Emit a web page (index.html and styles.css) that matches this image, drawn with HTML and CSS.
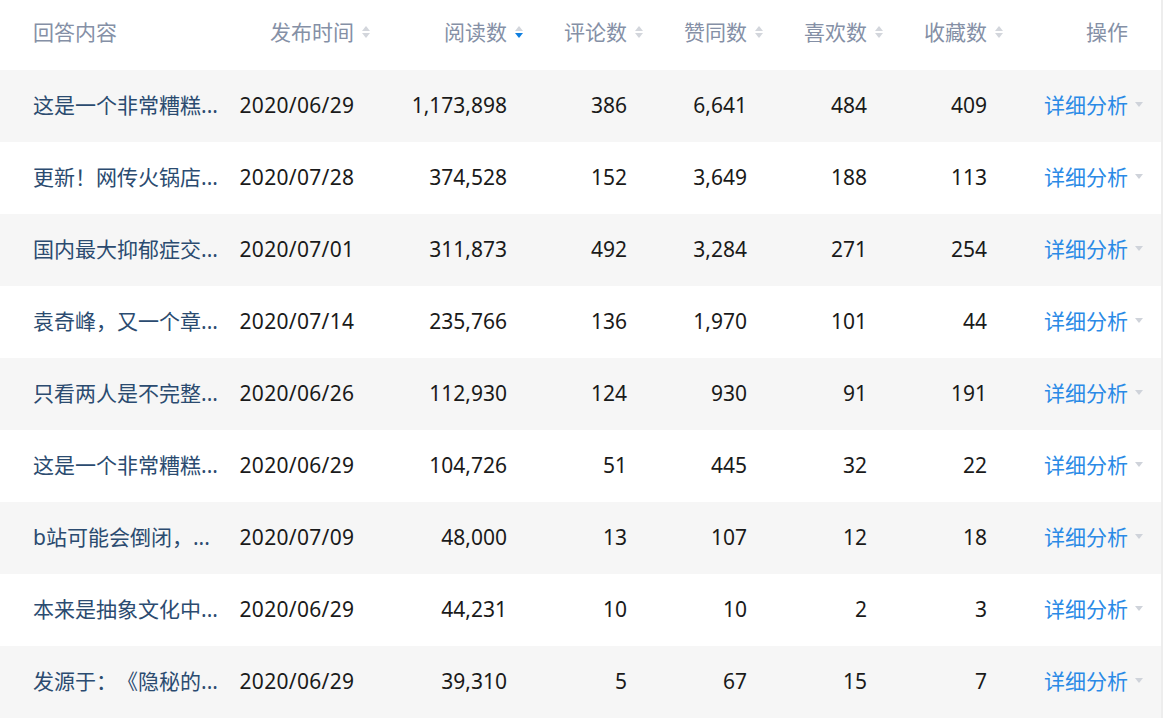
FILE: index.html
```html
<!DOCTYPE html>
<html lang="zh-CN">
<head>
<meta charset="utf-8">
<title>回答数据</title>
<link rel="stylesheet" href="styles.css">
</head>
<body>
<div class="table">
  <div class="row head">
    <div class="cell title">回答内容</div>
    <div class="cell num"><span class="sortable">发布时间<span class="sort"><i class="up"></i><i class="down"></i></span></span></div>
    <div class="cell num"><span class="sortable">阅读数<span class="sort"><i class="up"></i><i class="down active"></i></span></span></div>
    <div class="cell num"><span class="sortable">评论数<span class="sort"><i class="up"></i><i class="down"></i></span></span></div>
    <div class="cell num"><span class="sortable">赞同数<span class="sort"><i class="up"></i><i class="down"></i></span></span></div>
    <div class="cell num"><span class="sortable">喜欢数<span class="sort"><i class="up"></i><i class="down"></i></span></span></div>
    <div class="cell num"><span class="sortable">收藏数<span class="sort"><i class="up"></i><i class="down"></i></span></span></div>
    <div class="cell op">操作</div>
  </div>

  <div class="row odd">
    <div class="cell title"><a class="link">这是一个非常糟糕...</a></div>
    <div class="cell num date">2020/06/29</div>
    <div class="cell num">1,173,898</div>
    <div class="cell num">386</div>
    <div class="cell num">6,641</div>
    <div class="cell num">484</div>
    <div class="cell num">409</div>
    <div class="cell op"><span class="action">详细分析<i class="caret"></i></span></div>
  </div>
  <div class="row">
    <div class="cell title"><a class="link">更新！网传火锅店...</a></div>
    <div class="cell num date">2020/07/28</div>
    <div class="cell num">374,528</div>
    <div class="cell num">152</div>
    <div class="cell num">3,649</div>
    <div class="cell num">188</div>
    <div class="cell num">113</div>
    <div class="cell op"><span class="action">详细分析<i class="caret"></i></span></div>
  </div>
  <div class="row odd">
    <div class="cell title"><a class="link">国内最大抑郁症交...</a></div>
    <div class="cell num date">2020/07/01</div>
    <div class="cell num">311,873</div>
    <div class="cell num">492</div>
    <div class="cell num">3,284</div>
    <div class="cell num">271</div>
    <div class="cell num">254</div>
    <div class="cell op"><span class="action">详细分析<i class="caret"></i></span></div>
  </div>
  <div class="row">
    <div class="cell title"><a class="link">袁奇峰，又一个章...</a></div>
    <div class="cell num date">2020/07/14</div>
    <div class="cell num">235,766</div>
    <div class="cell num">136</div>
    <div class="cell num">1,970</div>
    <div class="cell num">101</div>
    <div class="cell num">44</div>
    <div class="cell op"><span class="action">详细分析<i class="caret"></i></span></div>
  </div>
  <div class="row odd">
    <div class="cell title"><a class="link">只看两人是不完整...</a></div>
    <div class="cell num date">2020/06/26</div>
    <div class="cell num">112,930</div>
    <div class="cell num">124</div>
    <div class="cell num">930</div>
    <div class="cell num">91</div>
    <div class="cell num">191</div>
    <div class="cell op"><span class="action">详细分析<i class="caret"></i></span></div>
  </div>
  <div class="row">
    <div class="cell title"><a class="link">这是一个非常糟糕...</a></div>
    <div class="cell num date">2020/06/29</div>
    <div class="cell num">104,726</div>
    <div class="cell num">51</div>
    <div class="cell num">445</div>
    <div class="cell num">32</div>
    <div class="cell num">22</div>
    <div class="cell op"><span class="action">详细分析<i class="caret"></i></span></div>
  </div>
  <div class="row odd">
    <div class="cell title"><a class="link">b站可能会倒闭，...</a></div>
    <div class="cell num date">2020/07/09</div>
    <div class="cell num">48,000</div>
    <div class="cell num">13</div>
    <div class="cell num">107</div>
    <div class="cell num">12</div>
    <div class="cell num">18</div>
    <div class="cell op"><span class="action">详细分析<i class="caret"></i></span></div>
  </div>
  <div class="row">
    <div class="cell title"><a class="link">本来是抽象文化中...</a></div>
    <div class="cell num date">2020/06/29</div>
    <div class="cell num">44,231</div>
    <div class="cell num">10</div>
    <div class="cell num">10</div>
    <div class="cell num">2</div>
    <div class="cell num">3</div>
    <div class="cell op"><span class="action">详细分析<i class="caret"></i></span></div>
  </div>
  <div class="row odd">
    <div class="cell title"><a class="link">发源于：《隐秘的...</a></div>
    <div class="cell num date">2020/06/29</div>
    <div class="cell num">39,310</div>
    <div class="cell num">5</div>
    <div class="cell num">67</div>
    <div class="cell num">15</div>
    <div class="cell num">7</div>
    <div class="cell op"><span class="action">详细分析<i class="caret"></i></span></div>
  </div>
</div>
</body>
</html>
```

FILE: styles.css
```css
html, body {
  margin: 0;
  padding: 0;
  background: #fff;
}

body {
  font-family: "Noto Sans", "Noto Sans CJK SC", sans-serif;
  font-size: 21px;
  color: #1a1a1a;
  width: 1168px;
  height: 718px;
  overflow: hidden;
  text-spacing-trim: space-all;
}

.table {
  width: 1161px;
  border-right: 2px solid #ededed;
}

.row {
  display: grid;
  grid-template-columns: 225px 149px 153px 120px 120px 120px 120px 154px;
  height: 72px;
  align-items: center;
  padding-bottom: 2px;
  box-sizing: border-box;
}

.row.odd {
  background: #f6f6f6;
}

.row.head {
  height: 70px;
  color: #8590a6;
  padding-bottom: 6px;
}

.cell {
  white-space: nowrap;
  line-height: 30px;
}

.cell.title {
  padding-left: 33px;
  overflow: hidden;
}

.cell.num {
  text-align: right;
  padding-right: 20px;
}

.cell.date {
  letter-spacing: 0.3px;
  margin-right: -0.3px;
}

.cell.op {
  text-align: right;
  padding-right: 33px;
}

.link {
  color: #2b4b70;
  text-decoration: none;
}

.sortable {
  position: relative;
}

.sort {
  position: absolute;
  left: 100%;
  margin-left: 8px;
  top: 50%;
  transform: translateY(-50%);
  width: 8px;
  height: 12px;
  display: flex;
  flex-direction: column;
  justify-content: space-between;
}

.sort i {
  display: block;
  width: 0;
  height: 0;
  border-left: 4px solid transparent;
  border-right: 4px solid transparent;
}

.sort .up {
  border-bottom: 5px solid #d3d6dc;
}

.sort .down {
  border-top: 5px solid #d3d6dc;
}

.sort .down.active {
  border-top-color: #0f7fe0;
}

.action {
  position: relative;
  color: #2a8ae6;
}

.caret {
  position: absolute;
  left: 100%;
  margin-left: 7px;
  top: 50%;
  margin-top: -3px;
  width: 0;
  height: 0;
  border-left: 4px solid transparent;
  border-right: 4px solid transparent;
  border-top: 5px solid #cfd3da;
}
```
